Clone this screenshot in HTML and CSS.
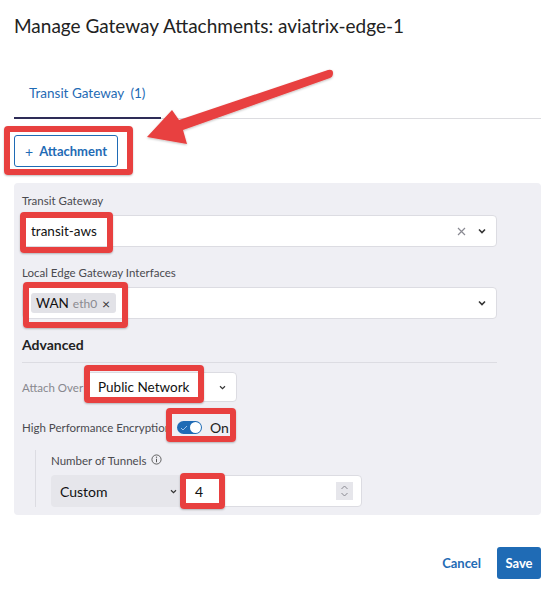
FILE: index.html
```html
<!DOCTYPE html>
<html lang="en">
<head>
<meta charset="utf-8">
<title>Manage Gateway Attachments</title>
<link rel="stylesheet" href="styles.css">
</head>
<body>
<div class="dialog">
  <h1 class="title">Manage Gateway Attachments: aviatrix-edge-1</h1>

  <div class="tabs">
    <div class="tab active">Transit Gateway <span class="count">(1)</span></div>
  </div>

  <div class="toolbar">
    <button class="btn-outline"><span class="plus">+</span>Attachment<span class="hl hl-btn"></span></button>
  </div>

  <section class="panel">
    <div class="field">
      <label class="label">Transit Gateway</label>
      <div class="select">
        <span class="value">transit-aws</span>
        <span class="icons">
          <svg class="clear" width="9" height="9" viewBox="0 0 9 9"><path d="M1 1L8 8M8 1L1 8" stroke="#8a8a92" stroke-width="1.2"/></svg>
          <svg class="chev" width="8" height="6" viewBox="0 0 8 6"><path d="M1 1.5L4 4.5L7 1.5" fill="none" stroke="#333" stroke-width="1.6"/></svg>
        </span>
        <span class="hl hl-tgw"></span>
      </div>
    </div>

    <div class="field field-last">
      <label class="label">Local Edge Gateway Interfaces</label>
      <div class="select">
        <span class="chip"><span class="chip-name">WAN</span><span class="chip-sub">eth0</span><span class="chip-x">×</span></span>
        <span class="icons">
          <svg class="chev" width="8" height="6" viewBox="0 0 8 6"><path d="M1 1.5L4 4.5L7 1.5" fill="none" stroke="#333" stroke-width="1.6"/></svg>
        </span>
        <span class="hl hl-chip"></span>
      </div>
    </div>

    <h2 class="section-title">Advanced</h2>
    <hr class="divider">

    <div class="row">
      <span class="row-label muted">Attach Over</span>
      <div class="select select-sm">
        <span class="value">Public Network</span>
        <span class="icons">
          <svg class="chev" width="7" height="5" viewBox="0 0 8 6"><path d="M1 1.5L4 4.5L7 1.5" fill="none" stroke="#333" stroke-width="1.4"/></svg>
        </span>
        <span class="hl hl-attach"></span>
      </div>
    </div>

    <div class="row row-toggle">
      <span class="row-label">High Performance Encryption</span>
      <span class="toggle-wrap">
        <span class="toggle">
          <svg class="check" width="8" height="6" viewBox="0 0 8 6"><path d="M1 3L3 5L7 1" fill="none" stroke="#9fc3ea" stroke-width="1"/></svg>
          <span class="knob"></span>
        </span>
        <span class="toggle-text">On</span>
        <span class="hl hl-toggle"></span>
      </span>
    </div>

    <div class="sub">
      <div class="sub-label">Number of Tunnels
        <svg class="info" width="11" height="11" viewBox="0 0 12 12"><circle cx="6" cy="6" r="5" fill="none" stroke="#555" stroke-width="1"/><path d="M6 5.2V9" stroke="#555" stroke-width="1.1"/><circle cx="6" cy="3.5" r="0.7" fill="#555"/></svg>
      </div>
      <div class="combo">
        <div class="combo-select">
          <span>Custom</span>
          <svg class="chev" width="7" height="5" viewBox="0 0 8 6"><path d="M1 1.5L4 4.5L7 1.5" fill="none" stroke="#333" stroke-width="1.4"/></svg>
        </div>
        <div class="number">
          <span class="num-value">4</span>
          <span class="spinner">
            <svg width="9" height="14" viewBox="0 0 9 14"><path d="M1.5 5L4.5 2L7.5 5M1.5 9L4.5 12L7.5 9" fill="none" stroke="#8a8a92" stroke-width="1"/></svg>
          </span>
          <span class="hl hl-num"></span>
        </div>
      </div>
    </div>
  </section>

  <div class="footer">
    <button class="btn-link">Cancel</button>
    <button class="btn-primary">Save</button>
  </div>

  <svg class="arrow" width="554" height="200" viewBox="0 0 554 200">
    <defs>
      <filter id="sh" x="-10%" y="-10%" width="120%" height="130%">
        <feDropShadow dx="0" dy="1" stdDeviation="1" flood-color="#000" flood-opacity="0.25"/>
      </filter>
    </defs>
    <g filter="url(#sh)" fill="#e8403f">
      <path d="M147 137 L172 110 L179 120 L328 70 Q333 69 333 73 Q333 77 330 78 L183 130 L187 144 Z"/>
    </g>
  </svg>
</div>
</body>
</html>
```

FILE: styles.css
```css
* { box-sizing: border-box; }

body {
  margin: 0;
  background: #fff;
  font-family: Lato, "Noto Sans", sans-serif;
  color: #222;
}

.dialog {
  position: relative;
  width: 554px;
  height: 593px;
  padding: 14px 13px 0 14px;
}

.title {
  margin: 0;
  font-size: 19px;
  font-weight: 400;
  line-height: 24px;
  color: #222;
}

.tabs {
  margin-top: 43px;
  display: flex;
  border-bottom: 1px solid #dcdce0;
}

.tab {
  width: 147px;
  padding: 0 0 12px 15px;
  font-size: 13.5px;
  line-height: 24px;
  color: #1f6bb5;
  margin-bottom: -1px;
}

.tab.active { border-bottom: 2px solid #2e2c57; }
.tab .count { margin-left: 3px; }

.toolbar {
  margin-top: 16px;
  display: flex;
}

.btn-outline {
  position: relative;
  width: 104px;
  height: 32px;
  border: 1px solid #1f6bb5;
  border-radius: 3px;
  background: #fff;
  color: #1f6bb5;
  font-family: inherit;
  font-size: 13px;
  font-weight: 700;
  display: flex;
  align-items: center;
  justify-content: center;
  padding: 0;
}

.plus { font-weight: 400; margin-right: 6px; font-size: 14px; }

.hl {
  position: absolute;
  border: 6px solid #e8403f;
  border-radius: 4px;
  box-shadow: 0 1px 2px rgba(0,0,0,0.25);
  pointer-events: none;
}

.hl-btn { left: -11px; top: -10px; width: 129px; height: 49px; }

.panel {
  margin-top: 16px;
  width: 527px;
  background: #efeff4;
  border-radius: 4px;
  padding: 10px 44px 8px 8px;
}

.field { margin-bottom: 18px; }
.field-last { margin-bottom: 17px; }

.label {
  display: block;
  font-size: 11.5px;
  line-height: 16px;
  color: #4a4a4f;
  margin-bottom: 6px;
}

.select {
  position: relative;
  height: 32px;
  background: #fff;
  border: 1px solid #dcdce2;
  border-radius: 4px;
  display: flex;
  align-items: center;
  padding: 0 10px 0 8px;
}

.value { font-size: 13.5px; color: #111; flex: 1; }

.icons {
  margin-left: auto;
  display: flex;
  align-items: center;
  gap: 12px;
}

.chip {
  display: inline-flex;
  align-items: center;
  height: 20px;
  background: #e2e2e7;
  border-radius: 3px;
  padding: 0 6px 0 5px;
  width: 85px;
}

.chip-name { font-size: 13.5px; color: #111; }
.chip-sub { font-size: 12px; color: #8a8a90; margin-left: 4px; }
.chip-x { margin-left: auto; font-size: 14px; color: #333; }

.hl-tgw { left: -3px; top: -4px; width: 93px; height: 41px; }
.hl-chip { left: 0; top: -6px; width: 105px; height: 46px; }

.section-title {
  margin: 0;
  font-size: 14px;
  font-weight: 700;
  line-height: 18px;
  color: #222;
}

.divider {
  margin: 8px 0 9px;
  border: 0;
  border-top: 1px solid #dcdce2;
}

.row {
  display: flex;
  align-items: center;
}

.row-label {
  font-size: 11.5px;
  color: #4a4a4f;
  white-space: nowrap;
}

.row-label.muted { color: #88888e; width: 63px; }

.select-sm {
  width: 152px;
  height: 30px;
  padding: 0 10px 0 12px;
}

.hl-attach { left: -2px; top: -8px; width: 120px; height: 38px; }

.row-toggle { margin-top: 8px; height: 34px; }

.row-toggle .row-label { width: 150px; flex-shrink: 0; }

.toggle-wrap {
  position: relative;
  display: inline-flex;
  align-items: center;
  margin-left: 5px;
}

.toggle {
  position: relative;
  width: 25px;
  height: 13px;
  border-radius: 7px;
  background: #1f6bb5;
  display: inline-flex;
  align-items: center;
}

.check { position: absolute; left: 3px; top: 4px; }

.knob {
  position: absolute;
  right: 1px;
  top: 1px;
  width: 11px;
  height: 11px;
  border-radius: 50%;
  background: #fff;
}

.toggle-text { font-size: 14px; margin-left: 8px; color: #222; }

.hl-toggle { left: -11px; top: -11px; width: 70px; height: 34px; }

.sub {
  margin: 6px 0 0 13px;
  border-left: 1px solid #dcdce2;
  padding: 0 0 0 15px;
}

.sub-label {
  font-size: 11.5px;
  line-height: 16px;
  color: #4a4a4f;
  display: flex;
  align-items: center;
  gap: 5px;
  padding-top: 3px;
}

.info { margin-top: -3px; }

.combo {
  margin-top: 6px;
  display: flex;
  height: 32px;
}

.combo-select {
  width: 134px;
  background: #e6e6eb;
  border-radius: 4px 0 0 4px;
  display: flex;
  align-items: center;
  justify-content: space-between;
  padding: 0 8px 0 9px;
  font-size: 14px;
  color: #111;
}

.number {
  position: relative;
  width: 177px;
  background: #fff;
  border: 1px solid #dcdce2;
  border-radius: 0 4px 4px 0;
  display: flex;
  align-items: center;
  padding: 0 8px 0 9px;
}

.num-value { font-size: 14px; color: #111; }

.spinner {
  margin-left: auto;
  width: 17px;
  height: 18px;
  background: #e6e6eb;
  display: flex;
  align-items: center;
  justify-content: center;
}

.hl-num { left: -6px; top: -3px; width: 45px; height: 36px; }

.footer {
  margin-top: 32px;
  display: flex;
  justify-content: flex-end;
  align-items: center;
  gap: 16px;
}

.btn-link {
  border: 0;
  background: none;
  color: #1f6bb5;
  font-family: inherit;
  font-size: 13px;
  font-weight: 700;
  padding: 0;
}

.btn-primary {
  width: 44px;
  height: 32px;
  border: 0;
  border-radius: 3px;
  background: #1f6bb5;
  color: #fff;
  font-family: inherit;
  font-size: 13px;
  font-weight: 700;
  padding: 0;
}

.arrow {
  position: absolute;
  left: 0;
  top: 0;
  pointer-events: none;
}
```
